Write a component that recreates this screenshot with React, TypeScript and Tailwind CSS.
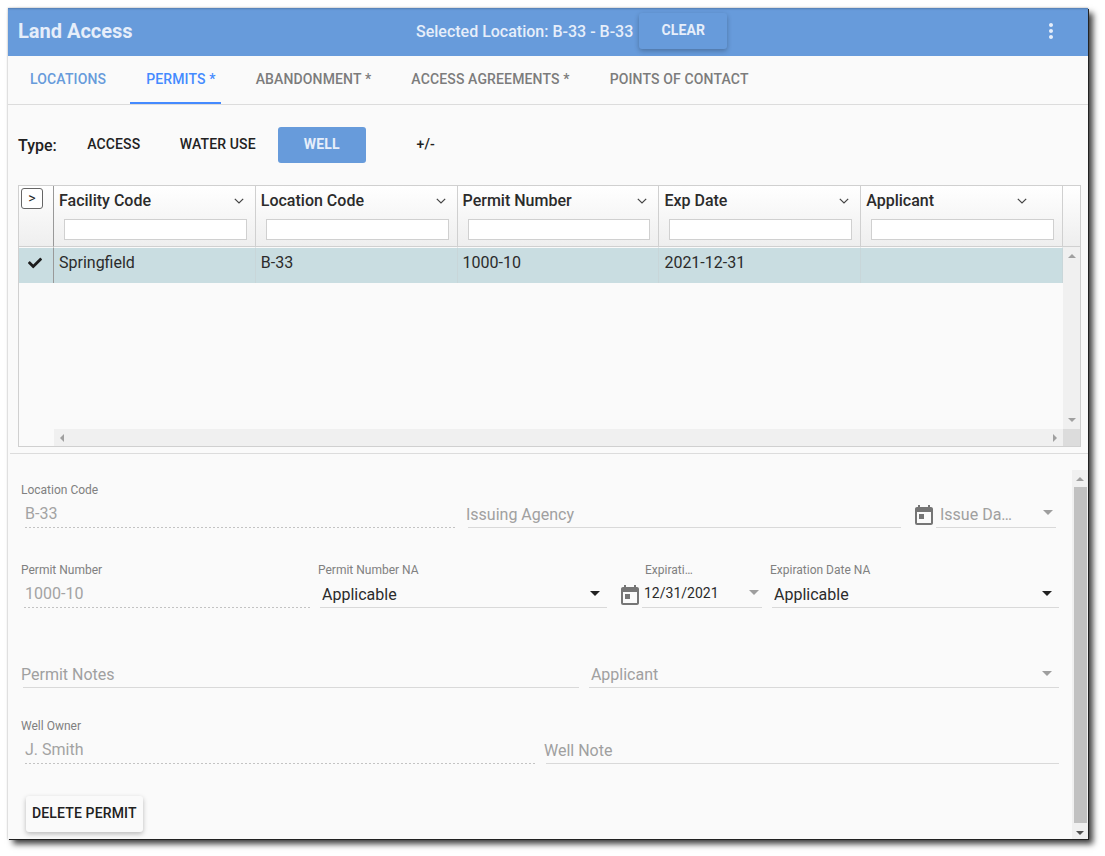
import React, { useState } from "react";
import { FaCheck } from "react-icons/fa";
import { MdMoreVert, MdToday } from "react-icons/md";

const tabs = [
  "LOCATIONS",
  "PERMITS *",
  "ABANDONMENT *",
  "ACCESS AGREEMENTS *",
  "POINTS OF CONTACT",
];

const types = ["ACCESS", "WATER USE", "WELL", "+/-"];

const columns = [
  "Facility Code",
  "Location Code",
  "Permit Number",
  "Exp Date",
  "Applicant",
];

const rows = [["Springfield", "B-33", "1000-10", "2021-12-31", ""]];

// Small solid triangle used by the scrollbars
function Arrow({ dir, className = "" }: { dir: string; className?: string }) {
  const paths: Record<string, string> = {
    up: "M0 6L4 2L8 6Z",
    down: "M0 2L8 2L4 6Z",
    left: "M6 0L2 4L6 8Z",
    right: "M2 0L6 4L2 8Z",
  };
  return (
    <svg viewBox="0 0 8 8" className={`size-2 ${className}`} fill="currentColor">
      <path d={paths[dir]} />
    </svg>
  );
}

function Caret({ className }: { className: string }) {
  return (
    <svg
      viewBox="0 0 10 5"
      className={`pointer-events-none h-[5px] w-[10px] shrink-0 ${className}`}
      fill="currentColor"
    >
      <path d="M0 0H10L5 5Z" />
    </svg>
  );
}

type FieldProps = {
  id: string;
  label: string;
  value?: string;
  className?: string;
};

const floating = "block h-5 whitespace-nowrap text-xs leading-5 text-[#808080]";
const resting = "absolute top-5 text-base leading-[30px] whitespace-nowrap text-[#a0a0a0]";

function TextField({ id, label, value, className = "" }: FieldProps) {
  return (
    <div className={`relative min-w-0 ${className}`}>
      <label htmlFor={id} className={value ? floating : `left-0 ${resting}`}>
        {label}
      </label>
      <div className={value ? "pl-0.5" : "pt-5 pl-0.5"}>
        <input
          id={id}
          defaultValue={value}
          disabled={!!value}
          className={`block h-7 w-full bg-transparent px-0.5 pb-0.5 text-base text-[#a3a3a3] outline-none ${
            value
              ? "bg-[linear-gradient(to_right,#8c8c8c_25%,transparent_25%)] bg-[length:4px_1px] bg-bottom bg-repeat-x"
              : "border-b border-[#d9d9d9]"
          }`}
        />
      </div>
    </div>
  );
}

function SelectField({ id, label, value, className = "" }: FieldProps) {
  return (
    <div className={`relative min-w-0 ${className}`}>
      <label htmlFor={id} className={value ? floating : `left-1 ${resting}`}>
        {label}
      </label>
      <div className={value ? "pl-0.5" : "pt-5 pl-0.5"}>
        <div className="flex h-7 items-center border-b border-[#d9d9d9] pr-[7px]">
          <select
            id={id}
            className="h-full w-full min-w-0 appearance-none bg-transparent px-0.5 pt-0.5 text-base text-[#2b2b2b] outline-none"
          >
            <option>{value}</option>
          </select>
          <Caret className={value ? "text-[#212121]" : "text-[#9e9e9e]"} />
        </div>
      </div>
    </div>
  );
}

function DateField({ id, label, value }: FieldProps) {
  return (
    <div className="ml-[11px] flex shrink-0 items-end">
      <button type="button" aria-label="Open calendar" className="flex size-6 text-[#757575]">
        <MdToday size={24} />
      </button>
      <div className="relative w-[120px]">
        <label htmlFor={id} className={value ? `pl-[3px] ${floating}` : `left-1 ${resting}`}>
          {label}
        </label>
        <div className={value ? "" : "pt-5"}>
          <div className="flex h-7 items-center border-b border-[#d9d9d9] pr-[3px] pb-0.5">
            <input
              id={id}
              defaultValue={value}
              className="h-full w-full min-w-0 bg-transparent pl-0.5 text-sm text-[#2b2b2b] outline-none"
            />
            <Caret className="text-[#9e9e9e]" />
          </div>
        </div>
      </div>
    </div>
  );
}

function PermitGrid() {
  return (
    <div className="mr-[7px] ml-2.5 flex h-[262px] border border-[#d0d0d0]">
      <div className="flex min-w-0 flex-1 flex-col">
        <table className="w-full table-fixed border-separate border-spacing-0 text-left text-base text-[#2b2b2b]">
          <thead>
            <tr className="bg-linear-to-b from-white to-[#eeeeee]">
              <th className="h-[61px] w-[35px] border-r border-b border-[#d0d0d0] border-r-[#999] p-0 pt-0.5 pl-0.5 align-top">
                <button
                  aria-label="Grid menu"
                  className="block h-[21px] w-[22px] rounded-[3px] border border-[#666] bg-white text-center text-sm leading-[19px] font-normal"
                >
                  &gt;
                </button>
              </th>
              {columns.map((col, i) => (
                <th
                  key={col}
                  className="h-[61px] border-r border-b border-[#d0d0d0] p-0 align-top font-medium"
                >
                  <div
                    className={`flex h-[30px] items-center justify-between pl-[5px] ${
                      i === columns.length - 1 ? "pr-[35px]" : "pr-[11px]"
                    }`}
                  >
                    {col}
                    <svg
                      viewBox="0 0 10 6"
                      className="h-[6px] w-[10px]"
                      fill="none"
                      stroke="#444"
                      strokeWidth="1.2"
                    >
                      <path d="M0.8 0.8L5 5L9.2 0.8" />
                    </svg>
                  </div>
                  <div className="mt-[3px] mr-2 ml-2.5">
                    <input
                      aria-label={col}
                      className="block h-[21px] w-full border border-[#d0d0d0] bg-white px-1 text-sm font-normal outline-none"
                    />
                  </div>
                </th>
              ))}
            </tr>
          </thead>
          <tbody>
            {rows.map((row) => (
              <tr key={row[2]} className="bg-[#c9dde1]">
                <td className="h-9 border-t border-r border-[#fafafa] border-r-[#999] p-0 pr-0.5 pb-1.5 text-[#1c1c1c]">
                  <FaCheck size={14} className="mx-auto" />
                </td>
                {row.map((cell, i) => (
                  <td
                    key={i}
                    className="h-9 border-t border-r border-[#fafafa] border-r-[#c8d6d9] p-0 pb-1.5 pl-[5px]"
                  >
                    {cell}
                  </td>
                ))}
              </tr>
            ))}
          </tbody>
        </table>
        <div className="mt-auto ml-[35px] flex h-[17px] items-center justify-between bg-[#f0f0f0] px-1 text-[#a0a0a0]">
          <Arrow dir="left" />
          <Arrow dir="right" />
        </div>
      </div>
      <div className="flex w-[17px] flex-col">
        <div className="h-[61px] border-b border-[#d0d0d0] bg-linear-to-b from-white to-[#eeeeee]" />
        <div className="flex flex-1 flex-col items-center justify-between bg-[#f0f0f0] py-[5px] text-[#a0a0a0]">
          <Arrow dir="up" />
          <Arrow dir="down" />
        </div>
        <div className="h-[17px] bg-[#dcdcdc]" />
      </div>
    </div>
  );
}

export default function App() {
  const [tab, setTab] = useState("PERMITS *");
  const [type, setType] = useState("WELL");

  return (
    <div className="min-h-screen bg-white p-2 pr-[17px] pb-4 font-[Roboto,sans-serif]">
      <div className="bg-[#fafafa] shadow-[1px_1px_0_#222,5px_5px_6px_rgba(0,0,0,0.75),0_0_2px_rgba(0,0,0,0.3)]">
        <header className="flex h-12 items-center bg-[#679bdb] text-[#e6eefa] shadow-[inset_0_2px_2px_-1px_rgba(0,0,0,0.2)]">
          <h1 className="w-[408px] pb-0.5 pl-2.5 text-xl font-bold">Land Access</h1>
          <div className="flex items-center gap-1.5">
            <span className="text-base font-medium">
              Selected Location: B-33 - B-33
            </span>
            <button className="mb-0.5 h-9 w-[88px] rounded-[3px] pb-0.5 text-sm font-bold tracking-[0.01em] shadow-[0_2px_5px_rgba(0,0,0,0.26)]">
              CLEAR
            </button>
          </div>
          <button aria-label="More" className="mr-[25px] mb-0.5 ml-auto">
            <MdMoreVert size={24} />
          </button>
        </header>

        <nav className="flex h-[49px] border-b border-[#dcdcdc] pl-1.5">
          {tabs.map((name) => (
            <button
              key={name}
              onClick={() => setTab(name)}
              className={`relative h-12 pr-6 pb-0.5 pl-4 text-sm font-medium tracking-[0.01em] ${
                name === tab
                  ? "text-[#448aff]"
                  : name === "LOCATIONS"
                    ? "text-[#679bdb]"
                    : "text-[#7c7c7c]"
              }`}
            >
              {name}
              {name === tab && (
                <span className="absolute right-[19px] bottom-0 left-0 h-0.5 bg-[#448aff]" />
              )}
            </button>
          ))}
        </nav>

        <div className="flex h-20 items-center gap-[13px] pl-2.5">
          <span className="pt-0.5 text-base font-medium text-[#212121]">Type:</span>
          <div className="flex gap-4">
            {types.map((name) => (
              <button
                key={name}
                onClick={() => setType(name)}
                className={`h-9 w-[88px] rounded-[3px] pb-0.5 text-sm tracking-[0.01em] ${
                  name === type
                    ? "bg-[#679bdb] font-bold text-[#e6eefa]"
                    : "font-medium text-[#222]"
                }`}
              >
                {name}
              </button>
            ))}
          </div>
        </div>

        <PermitGrid />

        <div className="mt-1.5 ml-0.5 border-t border-[#dcdcdc]" />

        <div className="mt-4 flex">
          <form className="min-w-0 flex-1 pt-2.5 pr-[13px] pb-[7px] pl-[13px]">
            <div className="flex pr-[3px]">
              <TextField id="location" label="Location Code" value="B-33" className="flex-1" />
              <TextField id="agency" label="Issuing Agency" className="ml-2.5 flex-1" />
              <DateField id="issueDate" label="Issue Da…" />
            </div>
            <div className="mt-8 flex">
              <TextField id="permit" label="Permit Number" value="1000-10" className="flex-1" />
              <SelectField
                id="permitNa"
                label="Permit Number NA"
                value="Applicable"
                className="ml-2 flex-1"
              />
              <DateField id="expDate" label="Expirati…" value="12/31/2021" />
              <SelectField
                id="expNa"
                label="Expiration Date NA"
                value="Applicable"
                className="ml-2 flex-1"
              />
            </div>
            <div className="mt-8 flex gap-2">
              <TextField id="notes" label="Permit Notes" className="flex-[13]" />
              <SelectField id="applicant" label="Applicant" className="flex-[11]" />
            </div>
            <div className="mt-7 flex gap-2">
              <TextField id="owner" label="Well Owner" value="J. Smith" className="flex-1" />
              <TextField id="wellNote" label="Well Note" className="flex-1" />
            </div>
            <button
              type="button"
              className="mt-8 ml-[5px] block h-9 rounded-[3px] px-1.5 pb-0.5 text-sm font-medium tracking-[0.01em] text-[#212121] shadow-[0_2px_5px_rgba(0,0,0,0.26)]"
            >
              DELETE PERMIT
            </button>
          </form>
          <div className="flex w-4 flex-col items-center bg-[#f0f0f0]">
            <Arrow dir="up" className="mt-[5px] mb-1 text-[#a0a0a0]" />
            <div className="w-[13px] flex-1 bg-[#c1c1c1]" />
            <Arrow dir="down" className="mt-1.5 mb-0.5 text-[#505050]" />
          </div>
        </div>
      </div>
    </div>
  );
}
